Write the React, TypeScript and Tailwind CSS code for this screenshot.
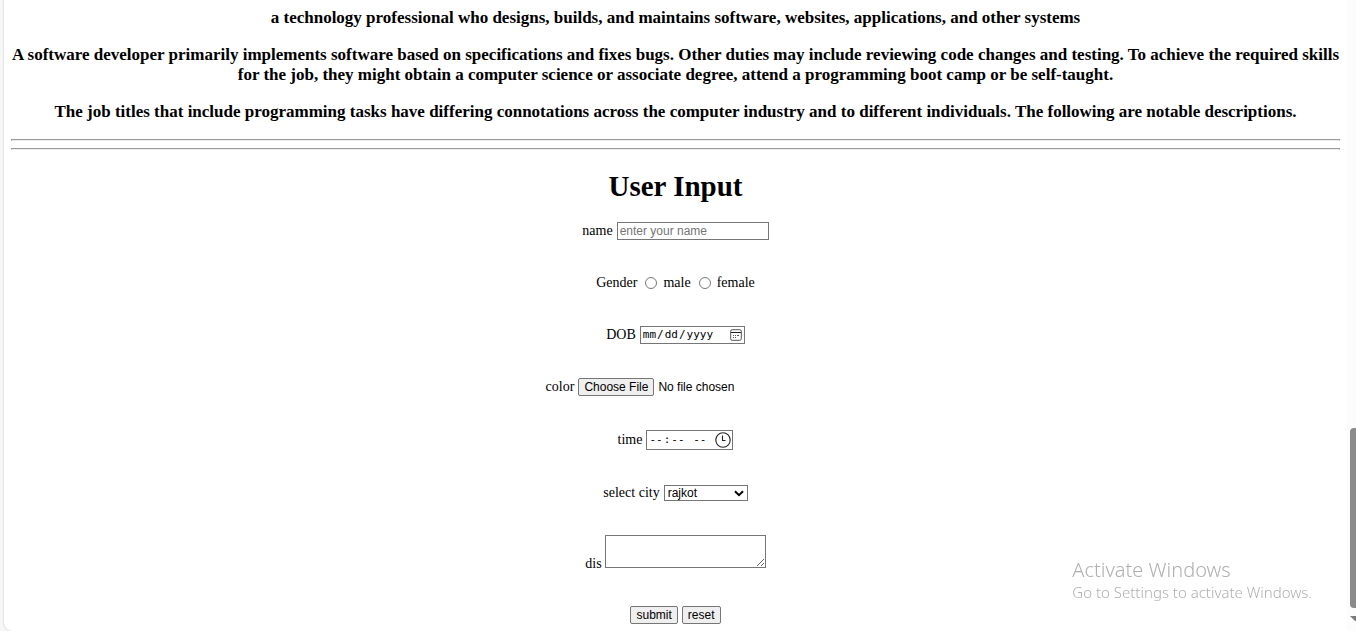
import type { ReactNode } from "react";

const field =
  "border border-[#767676] bg-white text-xs text-black font-['Liberation_Sans',Arial,sans-serif]";
const button =
  "h-[18px] rounded-[2px] border border-[#767676] bg-[#efefef] px-[5px] text-xs leading-4 text-black font-['Liberation_Sans',Arial,sans-serif]";
const picker =
  "border border-[#767676] bg-white pl-px font-['DejaVu_Sans_Mono',Consolas,monospace] text-[11px] leading-4 text-black [&::-webkit-calendar-picker-indicator]:opacity-0";

function Row({ children }: { children: ReactNode }) {
  return <div className="flex min-h-[18px] items-center justify-center gap-1">{children}</div>;
}

function Intro() {
  return (
    <section className="flex flex-col gap-[17px] text-center text-[17px] leading-5 font-bold">
      <h3>
        a technology professional who designs, builds, and maintains software, websites,
        applications, and other systems
      </h3>
      <h3>
        A software developer primarily implements software based on specifications and fixes bugs.
        Other duties may include reviewing code changes and testing. To achieve the required skills
        for the job, they might obtain a computer science or associate degree, attend a programming
        boot camp or be self-taught.
      </h3>
      <h3>
        The job titles that include programming tasks have differing connotations across the
        computer industry and to different individuals. The following are notable descriptions.
      </h3>
    </section>
  );
}

function UserForm() {
  return (
    <form className="flex flex-col gap-[34px] text-sm leading-4" onSubmit={(e) => e.preventDefault()}>
      <Row>
        <label htmlFor="name">name</label>
        <input
          id="name"
          type="text"
          placeholder="enter your name"
          className={`${field} h-[18px] w-[152px] px-[2px] placeholder:text-[#757575]`}
        />
      </Row>
      <Row>
        <span className="mr-1">Gender</span>
        <input id="male" type="radio" name="gender" className="mr-[2px] size-3" />
        <label htmlFor="male" className="mr-1">male</label>
        <input id="female" type="radio" name="gender" className="mr-[2px] size-3" />
        <label htmlFor="female">female</label>
      </Row>
      <Row>
        <label htmlFor="dob">DOB</label>
        <div className="relative flex">
          <input id="dob" type="date" className={`${picker} h-[18px] w-[105px]`} />
          <svg
            className="pointer-events-none absolute top-[3px] right-[3px] size-3"
            viewBox="0 0 12 12"
            fill="none"
            stroke="#555"
            aria-hidden="true"
          >
            <rect x="0.7" y="0.7" width="10.6" height="10.6" rx="1.5" />
            <path d="M1 3.5h10" stroke="#222" />
            <path d="M3 6.5h1M5 6.5h1M7 6.5h2M3 8.5h1M5 8.5h1" />
          </svg>
        </div>
      </Row>
      <Row>
        <label htmlFor="file">color</label>
        <input
          id="file"
          type="file"
          className="h-[18px] w-[227px] font-['Liberation_Sans',Arial,sans-serif] text-xs leading-4 file:mr-1 file:h-[18px] file:rounded-[2px] file:border file:border-solid file:border-[#767676] file:bg-[#efefef] file:px-[5px] file:text-black"
        />
      </Row>
      <Row>
        <label htmlFor="time">time</label>
        <div className="relative flex">
          <input id="time" type="time" className={`${picker} h-5 w-[87px]`} />
          <svg
            className="pointer-events-none absolute top-[2px] right-[2px] size-4"
            viewBox="0 0 16 16"
            fill="none"
            stroke="#222"
            strokeWidth="1.1"
            aria-hidden="true"
          >
            <circle cx="8" cy="8" r="7.2" />
            <path d="M7.5 3.5v5h3" />
          </svg>
        </div>
      </Row>
      <Row>
        <label htmlFor="city">select city</label>
        <div className="relative flex">
          <select id="city" className={`${field} h-4 w-[84px] appearance-none pl-[3px] leading-[14px]`}>
            <option>rajkot</option>
          </select>
          <svg
            className="pointer-events-none absolute top-[5px] right-1 h-[7px] w-[10px]"
            viewBox="0 0 10 7"
            fill="none"
            stroke="#000"
            strokeWidth="2"
            aria-hidden="true"
          >
            <path d="M1 1.3 5 5.2 9 1.3" />
          </svg>
        </div>
      </Row>
      <div className="-mt-px flex h-[37px] items-start justify-center gap-[3px]">
        <label htmlFor="dis" className="self-end">dis</label>
        <textarea id="dis" className={`${field} h-[33px] w-[161px] resize p-[2px]`} />
      </div>
      <Row>
        <button type="submit" className={button}>submit</button>
        <button type="reset" className={button}>reset</button>
      </Row>
    </form>
  );
}

function Scrollbar() {
  return (
    <div className="flex w-[9px] shrink-0 flex-col items-end overflow-hidden bg-[#fcfcfc]" aria-hidden="true">
      <div className="grow" />
      <div className="h-[180px] w-[6px] rounded-l-[4px] bg-[#8b8b8b]" />
      <svg className="mt-2 mb-[10px] h-[5px] w-[6px]" viewBox="0 0 6 5">
        <path d="M0 0h6v5H5z" fill="#7b7b7b" />
      </svg>
    </div>
  );
}

export default function App() {
  return (
    <div className="flex min-h-screen bg-[#f7f7f7] font-['Liberation_Serif','Times_New_Roman',serif] text-black">
      <main className="ml-1 min-w-0 grow rounded-bl-lg bg-white px-[7px] pt-2 pb-[7px] shadow-[0_0_2px_rgba(0,0,0,0.25)]">
        <Intro />
        <hr className="mt-[17px] h-[2px] border border-[#9a9a9a] border-b-[#eeeeee]" />
        <hr className="mt-[7px] h-[2px] border border-[#9a9a9a] border-b-[#eeeeee]" />
        <h1 className="mt-5 mb-[19px] text-center text-[29px] leading-[33px] font-bold">User Input</h1>
        <UserForm />
      </main>
      <Scrollbar />
      <aside className="pointer-events-none fixed right-11 bottom-[29px] font-['Noto_Sans','Segoe_UI',sans-serif] font-light text-[#b0b0b0]">
        <p className="text-xl leading-6">Activate Windows</p>
        <p className="text-[15px] leading-5">Go to Settings to activate Windows.</p>
      </aside>
    </div>
  );
}
